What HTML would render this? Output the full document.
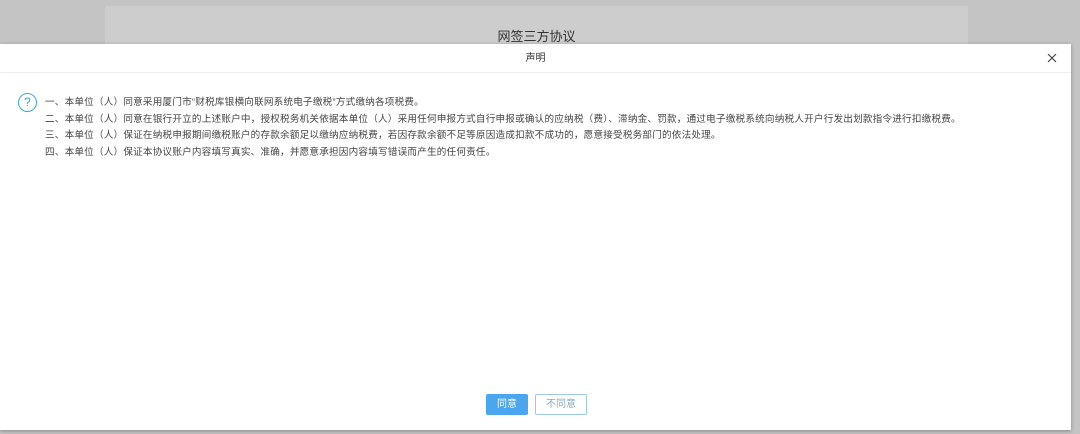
<!DOCTYPE html>
<html><head><meta charset="utf-8"><style>
html,body{margin:0;padding:0;width:1080px;height:434px;overflow:hidden;background:#c4c4c4;font-family:"Liberation Sans","Noto Sans CJK SC",sans-serif;}
.panel{position:absolute;left:105px;top:6px;width:863px;height:60px;background:#cdcdcd;}
.ptitle{position:absolute;left:0;width:100%;top:20px;text-align:center;font-size:13px;color:#333;}
.dlg{position:absolute;left:0;top:44px;width:1071px;height:386px;background:#fff;box-shadow:0 1px 4px rgba(0,0,0,.3);}
.hd{height:28px;border-bottom:1px solid #eee;text-align:center;line-height:29px;font-size:10px;color:#333;}
.x{position:absolute;right:14px;top:9px;}
.ic{position:absolute;left:18px;top:49px;width:17px;height:17px;border:1.5px solid #3aa8e0;border-radius:50%;color:#3aa8e0;font-size:12px;line-height:17px;text-align:center;}
.txt{position:absolute;left:45px;top:51px;font-size:9.6px;line-height:16.6px;color:#444;letter-spacing:.2px;white-space:nowrap;}
.b1{position:absolute;left:486px;top:350px;width:42px;height:21px;background:#4aa6ef;color:#fff;border-radius:2px;font-size:10px;text-align:center;line-height:21px;}
.b2{position:absolute;left:535px;top:350px;width:50px;height:19px;border:1px solid #9cc8ee;color:#8ab;border-radius:2px;font-size:10px;text-align:center;line-height:19px;}
</style></head><body>
<div class="panel"><div class="ptitle">网签三方协议</div></div>
<div class="dlg">
<div class="hd">声明</div>
<svg class="x" width="10" height="10" viewBox="0 0 10 10"><path d="M1 1L9 9M9 1L1 9" stroke="#444" stroke-width="1.2"/></svg>
<div class="ic">?</div>
<div class="txt">一、本单位（人）同意采用厦门市“财税库银横向联网系统电子缴税”方式缴纳各项税费。<br>二、本单位（人）同意在银行开立的上述账户中，授权税务机关依据本单位（人）采用任何申报方式自行申报或确认的应纳税（费）、滞纳金、罚款，通过电子缴税系统向纳税人开户行发出划款指令进行扣缴税费。<br>三、本单位（人）保证在纳税申报期间缴税账户的存款余额足以缴纳应纳税费，若因存款余额不足等原因造成扣款不成功的，愿意接受税务部门的依法处理。<br>四、本单位（人）保证本协议账户内容填写真实、准确，并愿意承担因内容填写错误而产生的任何责任。</div>
<div class="b1">同意</div>
<div class="b2">不同意</div>
</div>
</body></html>
